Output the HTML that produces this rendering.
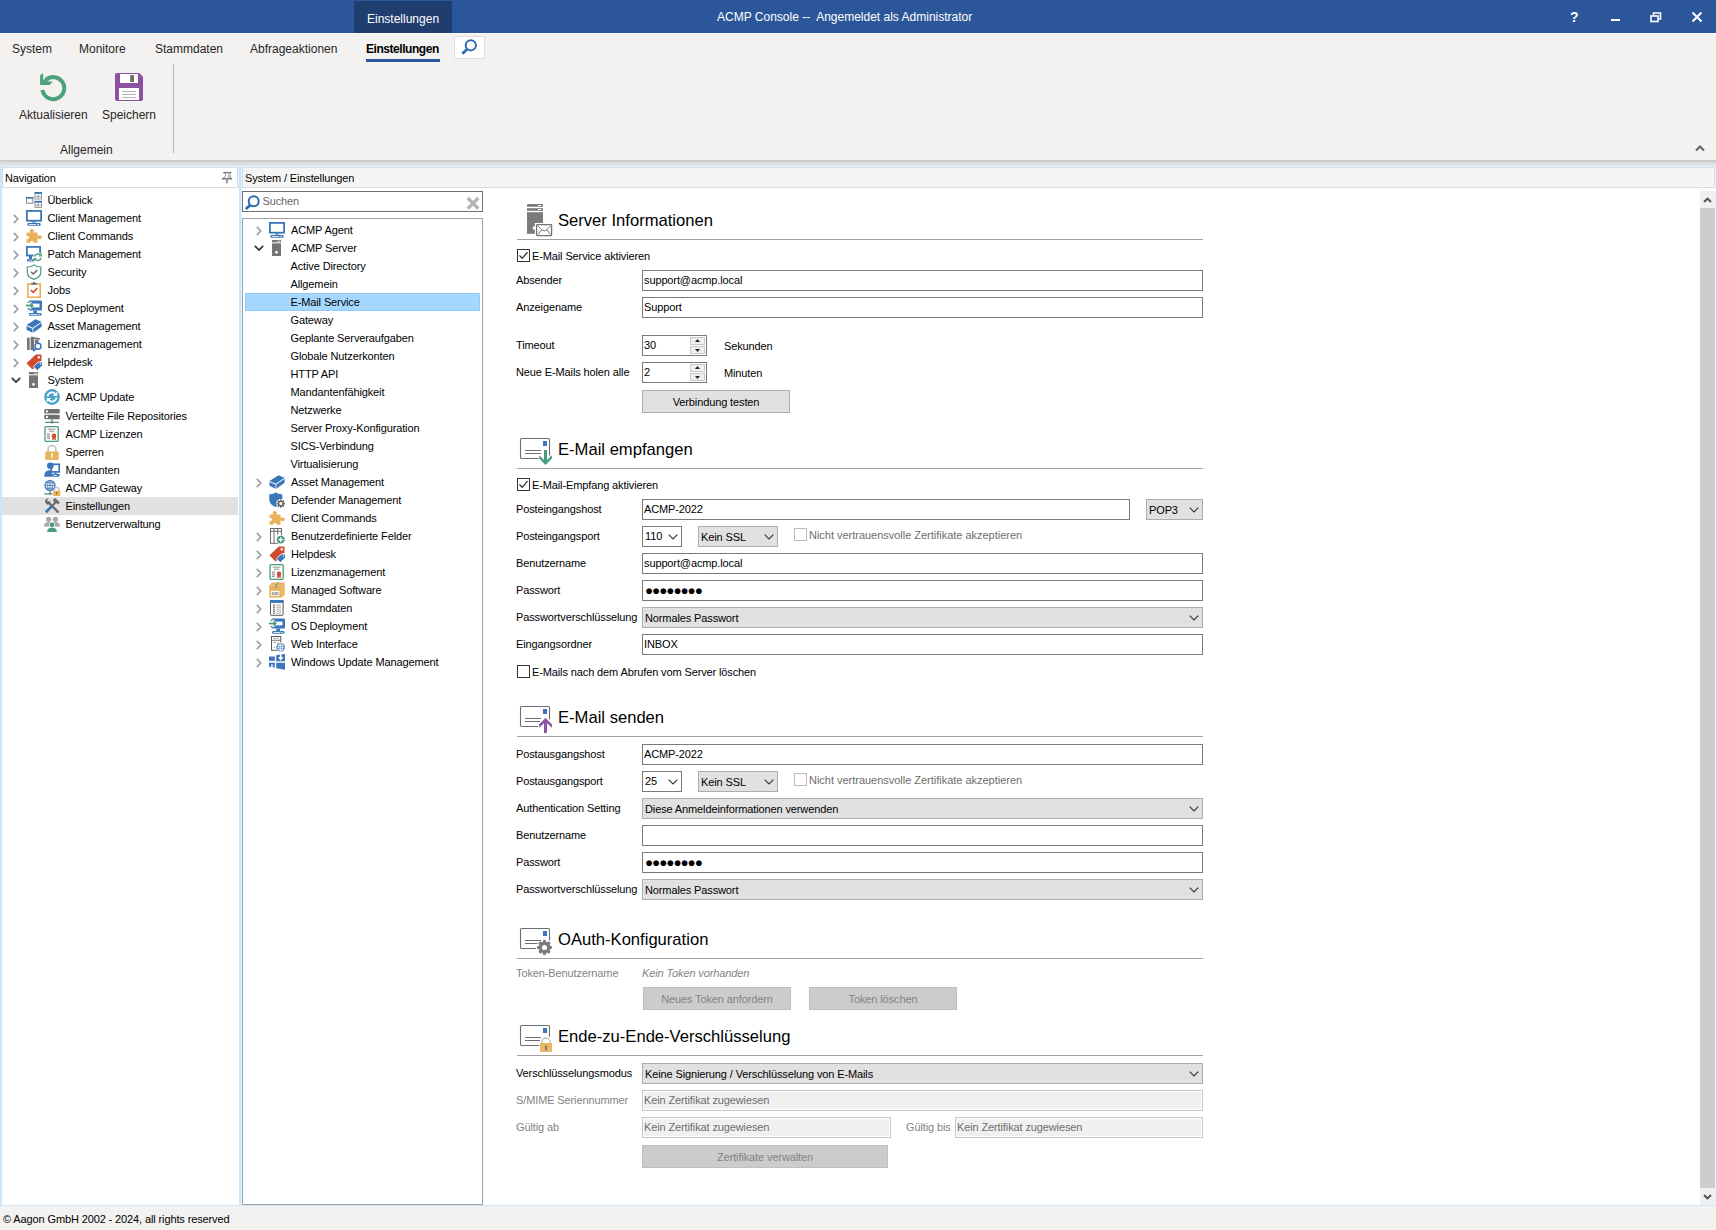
<!DOCTYPE html>
<html lang="de"><head><meta charset="utf-8"><title>ACMP Console</title>
<style>
*{box-sizing:border-box;margin:0;padding:0}
html,body{width:1716px;height:1230px;overflow:hidden;background:#f3f2f1}
body{position:relative;font-family:"Liberation Sans",sans-serif;font-size:11px;letter-spacing:-0.12px;color:#000;line-height:1}
.a{position:absolute;white-space:pre}
.rb{font-size:12px;color:#262626;letter-spacing:0}
.t{position:absolute;white-space:pre;height:18px;line-height:18px}
.lbl{position:absolute;white-space:pre;height:14px;line-height:14px;left:516px}
.inp{position:absolute;height:21px;border:1px solid #7a7a7a;background:#fff;line-height:19px;padding-left:1px;white-space:pre}
.sel{position:absolute;height:21px;border:1px solid #adadad;background:#e1e1e1;line-height:21px;padding-left:2px;white-space:pre}
.dis{position:absolute;height:21px;border:1px solid #c6c6c6;box-shadow:inset 0 0 0 1px #fff;background:#f0f0f0;line-height:19px;padding-left:1px;white-space:pre;color:#6d6d6d}
.btn{position:absolute;height:23px;border:1px solid #adadad;background:#e1e1e1;line-height:22px;text-align:center;white-space:pre}
.btn.d{background:#cccccc;border-color:#bfbfbf;color:#838383}
.h{position:absolute;left:558px;font-size:16.6px;letter-spacing:0;height:22px;line-height:22px;white-space:pre;color:#000}
.hr{position:absolute;left:517px;width:686px;height:1px;background:#a0a0a0}
.cb{position:absolute;width:13px;height:13px;border:1px solid #333;background:#fff}
.cb.g{border-color:#bcbcbc}
.gray{color:#838383}
.gray2{color:#6d6d6d;letter-spacing:-0.02px}
svg{position:absolute;overflow:visible}
</style></head><body>

<div class="a" style="left:0;top:0;width:1716px;height:33px;background:#2b579a"></div>
<div class="a" style="left:354px;top:1px;width:98px;height:32px;background:#1f3d6e"></div>
<div class="a rb" style="left:367px;top:12px;color:#fff;line-height:14px">Einstellungen</div>
<div class="a rb" style="left:717px;top:10px;color:#fff;line-height:14px">ACMP Console --  Angemeldet als Administrator</div>
<div class="a" style="left:1570px;top:9px;color:#fff;font-weight:bold;font-size:14px;line-height:16px">?</div>
<div class="a" style="left:1611px;top:19px;width:9px;height:2px;background:#fff"></div>
<svg style="left:1650px;top:12px" width="12" height="11"><path d="M3.5 3.5V1h7v6H8" fill="none" stroke="#fff" stroke-width="1.6"/><rect x="1" y="4" width="7" height="5.5" fill="none" stroke="#fff" stroke-width="1.6"/></svg>
<svg style="left:1692px;top:12px" width="10" height="10"><path d="M0.5 0.5L9.5 9.5M9.5 0.5L0.5 9.5" stroke="#fff" stroke-width="2"/></svg>
<div class="a" style="left:0;top:33px;width:1716px;height:127px;background:#f3f2f1"></div>
<div class="a" style="left:0;top:33px;width:1716px;height:1px;background:#fcfcfb"></div>
<div class="a rb" style="left:12px;top:42px;line-height:15px">System</div>
<div class="a rb" style="left:79px;top:42px;line-height:15px">Monitore</div>
<div class="a rb" style="left:155px;top:42px;line-height:15px">Stammdaten</div>
<div class="a rb" style="left:250px;top:42px;line-height:15px">Abfrageaktionen</div>
<div class="a rb" style="left:366px;top:42px;line-height:15px;font-weight:bold;color:#000;letter-spacing:-0.45px">Einstellungen</div>
<div class="a" style="left:366px;top:59px;width:74px;height:3px;background:#2b579a"></div>
<div class="a" style="left:453.500px;top:35.500px;width:31px;height:23px;background:#fff;border:1px solid #e1dfdd"></div>
<svg style="left:460px;top:38px" width="20" height="18"><circle cx="10.800" cy="7.300" r="5.100" fill="none" stroke="#2f6eb5" stroke-width="2"/><path d="M7.200 11L2.400 15.800" stroke="#2f6eb5" stroke-width="2.800"/></svg>
<svg style="left:39px;top:72px" width="30" height="31" viewBox="0 0 30 31"><path d="M6.500 8.300A11 11 0 1 1 3.400 18" fill="none" stroke="#4ba07d" stroke-width="4"/><path d="M1.100 3.500L4 0.900L4.200 7.200L8.500 9.500L13.800 9.400L10.500 12.900H1.100Z" fill="#4ba07d"/></svg>
<svg style="left:115px;top:73px" width="28" height="28" viewBox="0 0 28 28"><path d="M2 0H24.300L28 3.700V26Q28 28 26 28H2Q0 28 0 26V2Q0 0 2 0Z" fill="#8c51a0"/><rect x="5" y="1" width="18" height="9" fill="#fff"/><rect x="15.200" y="2.100" width="3.800" height="6.800" rx="0.500" fill="#6d6e72"/><rect x="4" y="15" width="20" height="12" fill="#fff"/><path d="M7 18.500H21M7 21.500H21M7 24.500H21" stroke="#b3b3b3" stroke-width="1"/></svg>
<div class="a rb" style="left:19px;top:108px;line-height:15px">Aktualisieren</div>
<div class="a rb" style="left:102px;top:108px;line-height:15px">Speichern</div>
<div class="a rb" style="left:60px;top:143px;line-height:15px">Allgemein</div>
<div class="a" style="left:173px;top:64px;width:1px;height:89px;background:#b9b7b5"></div>
<svg style="left:1695px;top:144px" width="10" height="8"><path d="M1 6.500L5 2.500L9 6.500" fill="none" stroke="#666" stroke-width="2"/></svg>
<div class="a" style="left:0;top:160px;width:1716px;height:5px;background:linear-gradient(#cbc9c7,#e6e6e6)"></div>
<div class="a" style="left:0;top:165px;width:1716px;height:1041px;background:#e8f4fd"></div>
<div class="a" style="left:0;top:165px;width:1716px;height:1px;background:#cce6fb"></div>
<div class="a" style="left:0;top:1205px;width:1716px;height:1px;background:#cce6fb"></div>
<div class="a" style="left:0;top:166px;width:1.5px;height:1040px;background:#cce6fb"></div>
<div class="a" style="left:239px;top:166px;width:2px;height:1039px;background:#c9e5fb"></div>
<div class="a" style="left:2px;top:167px;width:236px;height:21px;background:#fff;border:1px solid #dcdcdc"></div>
<div class="a" style="left:2px;top:188px;width:236.500px;height:1017px;background:#fff"></div>
<div class="t" style="left:5px;top:169px;">Navigation</div>
<svg style="left:221px;top:171px" width="12" height="14" viewBox="0 0 12 14"><path d="M2.200 1.600H10.300" stroke="#777" stroke-width="1.300"/><path d="M3.300 2.200C5.500 4 5 5 2.200 7.200M9.200 2.200C8.200 4 8.800 5.500 10.300 7.200" fill="none" stroke="#777" stroke-width="1"/><path d="M6.800 2.200H9L9.800 7H6.800Z" fill="#bdbdbd"/><path d="M1 7.800H11.200" stroke="#777" stroke-width="1.500"/><path d="M5.300 8.500H6.900L6.700 11.300L5.200 13Z" fill="#777"/></svg>
<div class="a" style="left:242px;top:167px;width:1473px;height:21px;background:#f5f5f5;border:1px solid #dcdcdc"></div>
<div class="a" style="left:241.500px;top:188px;width:1474.500px;height:1017px;background:#fff"></div>
<div class="t" style="left:245px;top:169px;">System / Einstellungen</div>
<div class="a" style="left:0;top:1206px;width:1716px;height:24px;background:#f3f2f1"></div>
<div class="t" style="left:3px;top:1210px;">© Aagon GmbH 2002 - 2024, all rights reserved</div>
<svg style="left:26px;top:192px" width="16" height="16" viewBox="0 0 16 16"><rect x="0.500" y="5.800" width="6.400" height="5.400" fill="#fff" stroke="#8a8a8a"/><rect x="0" y="5" width="7.400" height="1.600" fill="#3b75ba"/><rect x="9" y="1" width="6.500" height="6" fill="#fff" stroke="#9a9a9a"/><rect x="8.500" y="0" width="7.500" height="1.800" fill="#3b75ba"/><path d="M12.250 2V7M9 4.500H15.500" stroke="#9a9a9a" stroke-width="0.900"/><rect x="9" y="9.800" width="6.500" height="5.700" fill="#fff" stroke="#9a9a9a"/><rect x="8.500" y="8.800" width="7.500" height="1.800" fill="#3b75ba"/><path d="M12.250 10.800V15.500M9 13.200H15.500" stroke="#9a9a9a" stroke-width="0.900"/></svg>
<div class="t" style="left:47.5px;top:191px;">Überblick</div>
<svg style="left:12.5px;top:213.5px" width="6" height="10"><path d="M0.800 0.900L4.800 5L0.800 9.100" fill="none" stroke="#9c9c9c" stroke-width="1.600"/></svg>
<svg style="left:26px;top:210px" width="16" height="16" viewBox="0 0 16 16"><rect x="0.900" y="0.900" width="14.200" height="9.800" fill="#fff" stroke="#3b75ba" stroke-width="1.800"/><rect x="6.300" y="11.400" width="3.400" height="1.300" fill="#3b75ba"/><rect x="1.300" y="13" width="13.400" height="2.800" rx="1.300" fill="#3b75ba"/><rect x="2.800" y="14" width="7.200" height="0.800" fill="#fff"/><rect x="11.300" y="14" width="1.700" height="0.800" fill="#fff"/></svg>
<div class="t" style="left:47.5px;top:209px;">Client Management</div>
<svg style="left:12.5px;top:231.5px" width="6" height="10"><path d="M0.800 0.900L4.800 5L0.800 9.100" fill="none" stroke="#9c9c9c" stroke-width="1.600"/></svg>
<svg style="left:26px;top:228px" width="16" height="16" viewBox="0 0 16 16"><rect x="0.500" y="4.600" width="11" height="10.200" rx="0.600" fill="#e9b35c"/><circle cx="5.800" cy="3" r="2.100" fill="#e9b35c"/><rect x="4.600" y="3.500" width="2.400" height="2" fill="#e9b35c"/><circle cx="13.700" cy="9.300" r="2" fill="#e9b35c"/><rect x="11" y="8.100" width="2" height="2.400" fill="#e9b35c"/><circle cx="1.300" cy="9.500" r="1.700" fill="#fff"/><circle cx="6" cy="14.400" r="1.700" fill="#fff"/></svg>
<div class="t" style="left:47.5px;top:227px;">Client Commands</div>
<svg style="left:12.5px;top:249.5px" width="6" height="10"><path d="M0.800 0.900L4.800 5L0.800 9.100" fill="none" stroke="#9c9c9c" stroke-width="1.600"/></svg>
<svg style="left:26px;top:246px" width="16" height="16" viewBox="0 0 16 16"><rect x="0.900" y="0.900" width="13.200" height="8.600" fill="#fff" stroke="#3b75ba" stroke-width="1.800"/><rect x="3" y="10" width="3" height="3" fill="#3b75ba"/><rect x="1" y="13" width="7" height="2.400" rx="1" fill="#3b75ba"/><rect x="2.500" y="13.800" width="4" height="0.700" fill="#fff"/><circle cx="11.800" cy="11.300" r="4.700" fill="#fff"/><path d="M8.600 10.600A3.300 3.300 0 0 1 14.300 9.200M15 12A3.300 3.300 0 0 1 9.300 13.400" fill="none" stroke="#4a9c7c" stroke-width="1.400"/><path d="M15.800 7.200V10.600H12.600Z" fill="#4a9c7c"/><path d="M7.800 15.400V12H11Z" fill="#4a9c7c"/></svg>
<div class="t" style="left:47.5px;top:245px;">Patch Management</div>
<svg style="left:12.5px;top:267.5px" width="6" height="10"><path d="M0.800 0.900L4.800 5L0.800 9.100" fill="none" stroke="#9c9c9c" stroke-width="1.600"/></svg>
<svg style="left:26px;top:264px" width="16" height="16" viewBox="0 0 16 16"><path d="M8 0.900C6 2.600 3.500 3 1.200 3V8C1.200 12 5 14.400 8 15.400C11 14.400 14.800 12 14.800 8V3C12.500 3 10 2.600 8 0.900Z" fill="#fff" stroke="#4a9c7c" stroke-width="1.200"/><path d="M5 7.800L7.300 10L11.200 5.900" fill="none" stroke="#6a6a6a" stroke-width="1.500"/></svg>
<div class="t" style="left:47.5px;top:263px;">Security</div>
<svg style="left:12.5px;top:285.5px" width="6" height="10"><path d="M0.800 0.900L4.800 5L0.800 9.100" fill="none" stroke="#9c9c9c" stroke-width="1.600"/></svg>
<svg style="left:26px;top:282px" width="16" height="16" viewBox="0 0 16 16"><rect x="1.800" y="2" width="12.400" height="13.200" fill="#fff" stroke="#e9b35c" stroke-width="1.700"/><rect x="5.300" y="0.800" width="5.400" height="2" fill="#777"/><rect x="7" y="0" width="2" height="1.500" fill="#777"/><path d="M4.800 8L7.200 10.400L11.400 6" fill="none" stroke="#d04a30" stroke-width="1.600"/></svg>
<div class="t" style="left:47.5px;top:281px;">Jobs</div>
<svg style="left:12.5px;top:303.5px" width="6" height="10"><path d="M0.800 0.900L4.800 5L0.800 9.100" fill="none" stroke="#9c9c9c" stroke-width="1.600"/></svg>
<svg style="left:26px;top:300px" width="16" height="16" viewBox="0 0 16 16"><rect x="2.500" y="0.400" width="13.500" height="10.200" rx="1" fill="#3b75ba"/><rect x="1.500" y="3.600" width="12" height="3.800" fill="#fff"/><rect x="1.500" y="1.800" width="4" height="7.400" fill="#fff"/><path d="M2.500 2V3M2.500 8V9.200" stroke="#3b75ba" stroke-width="1.600"/><path d="M0 5.500H6" stroke="#4a9c7c" stroke-width="1.800"/><path d="M4.500 2.600L8 5.500L4.500 8.400Z" fill="#4a9c7c"/><rect x="7.300" y="10.600" width="3.700" height="2.400" fill="#3b75ba"/><rect x="3" y="13" width="12.500" height="2.800" rx="1.300" fill="#3b75ba"/><rect x="4.500" y="14" width="7" height="0.800" fill="#fff"/><rect x="12.500" y="14" width="1.500" height="0.800" fill="#fff"/></svg>
<div class="t" style="left:47.5px;top:299px;">OS Deployment</div>
<svg style="left:12.5px;top:321.5px" width="6" height="10"><path d="M0.800 0.900L4.800 5L0.800 9.100" fill="none" stroke="#9c9c9c" stroke-width="1.600"/></svg>
<svg style="left:26px;top:318px" width="16" height="16" viewBox="0 0 16 16"><path d="M0.500 7L9.500 1.300L15.600 3.800L6.800 9.800Z" fill="#3b75ba"/><path d="M0.500 7.900L6.500 10.700V14.700L0.500 11.700Z" fill="#3b75ba"/><path d="M7.300 10.600L15.600 4.800V8.800L7.300 14.700Z" fill="#3b75ba"/></svg>
<div class="t" style="left:47.5px;top:317px;">Asset Management</div>
<svg style="left:12.5px;top:339.5px" width="6" height="10"><path d="M0.800 0.900L4.800 5L0.800 9.100" fill="none" stroke="#9c9c9c" stroke-width="1.600"/></svg>
<svg style="left:26px;top:336px" width="16" height="16" viewBox="0 0 16 16"><rect x="1" y="2.500" width="2.600" height="11.500" fill="#757575"/><path d="M0.500 3L2.300 1L4 3Z" fill="#757575"/><rect x="4.600" y="1.500" width="3.400" height="12.500" fill="#757575"/><path d="M5 0.500L14 2.200V3.800L5 2.200Z" fill="#757575"/><path d="M8.800 3.500H12.500V7H8.800Z" fill="#757575"/><circle cx="12" cy="10.300" r="3" fill="#fff" stroke="#3b75ba" stroke-width="1.500"/><path d="M9.800 12.500L7.300 15.200" stroke="#3b75ba" stroke-width="1.900"/></svg>
<div class="t" style="left:47.5px;top:335px;">Lizenzmanagement</div>
<svg style="left:12.5px;top:357.5px" width="6" height="10"><path d="M0.800 0.900L4.800 5L0.800 9.100" fill="none" stroke="#9c9c9c" stroke-width="1.600"/></svg>
<svg style="left:26px;top:354px" width="16" height="16" viewBox="0 0 16 16"><path d="M0.500 9.200L9.800 0.600H15.500V6.200L6.500 15.400Z" fill="#d04a30"/><circle cx="12.800" cy="3.200" r="1.200" fill="#fff"/><path d="M7.300 13L12.200 8H16.400V11.800L11.300 16.600Z" fill="#3b75ba" stroke="#fff" stroke-width="0.900"/><circle cx="14.300" cy="10" r="0.700" fill="#fff"/></svg>
<div class="t" style="left:47.5px;top:353px;">Helpdesk</div>
<svg style="left:10.5px;top:377px" width="10" height="6"><path d="M0.800 0.800L5 5L9.200 0.800" fill="none" stroke="#333" stroke-width="1.700"/></svg>
<svg style="left:26px;top:372px" width="16" height="16" viewBox="0 0 16 16"><rect x="3" y="0" width="9" height="2.300" fill="#757575"/><rect x="8.300" y="0.700" width="3" height="0.900" fill="#e8e8e8"/><rect x="3" y="3.300" width="9" height="12.700" fill="#757575"/><circle cx="7.500" cy="12.300" r="1.400" fill="#fff"/></svg>
<div class="t" style="left:47.5px;top:371px;">System</div>
<svg style="left:44px;top:389px" width="16" height="16" viewBox="0 0 16 16"><circle cx="8" cy="8" r="7.900" fill="#4aa3c8"/><path d="M3.600 7.300A4.500 4.500 0 0 1 11.300 4.800M12.400 8.700A4.500 4.500 0 0 1 4.700 11.200" fill="none" stroke="#fff" stroke-width="1.700"/><path d="M13.300 2.500V7H8.800Z" fill="#fff"/><path d="M2.700 13.500V9H7.200Z" fill="#fff"/></svg>
<div class="t" style="left:65.5px;top:388px;">ACMP Update</div>
<svg style="left:44px;top:408px" width="16" height="16" viewBox="0 0 16 16"><rect x="0.300" y="1" width="15.400" height="4.500" rx="0.800" fill="#6e6e6e"/><rect x="2" y="2.200" width="1.800" height="2.200" fill="#fff"/><rect x="0.300" y="6.700" width="15.400" height="4.500" rx="0.800" fill="#6e6e6e"/><rect x="2" y="7.900" width="1.800" height="2.200" fill="#fff"/><path d="M8 11.200V13.700M1 14.400H15" stroke="#4a9c7c" stroke-width="1.300"/><rect x="6.300" y="13.500" width="3.400" height="1.800" fill="#777"/></svg>
<div class="t" style="left:65.5px;top:407px;">Verteilte File Repositories</div>
<svg style="left:44px;top:426px" width="16" height="16" viewBox="0 0 16 16"><rect x="1" y="0.700" width="13.200" height="14.600" rx="1" fill="#fff" stroke="#4a9c7c" stroke-width="1.300"/><path d="M3.800 3.200H11.400M5 5.200H10.200" stroke="#888" stroke-width="0.900"/><path d="M3 8.200H6M3 10.200H6M3 12.200H6" stroke="#777" stroke-width="1"/><path d="M8.500 11L8 14.200L10 13.200L12 14.200L11.500 11Z" fill="#d04a30"/><circle cx="10" cy="9.800" r="2.300" fill="#d04a30"/></svg>
<div class="t" style="left:65.5px;top:425px;">ACMP Lizenzen</div>
<svg style="left:44px;top:444px" width="16" height="16" viewBox="0 0 16 16"><path d="M4.200 8V5.300A3.800 3.800 0 0 1 11.800 5.300V8" fill="none" stroke="#c4c4c4" stroke-width="1.700"/><rect x="1.300" y="7.500" width="13.400" height="8.400" fill="#e9b35c"/><circle cx="8" cy="10.500" r="1.100" fill="#fff"/><rect x="7.400" y="10.500" width="1.200" height="3.300" fill="#fff"/></svg>
<div class="t" style="left:65.5px;top:443px;">Sperren</div>
<svg style="left:44px;top:462px" width="16" height="16" viewBox="0 0 16 16"><rect x="7.300" y="2.300" width="7.900" height="7.600" fill="#fff" stroke="#3b75ba" stroke-width="1.700"/><rect x="8" y="11.800" width="7.500" height="3" rx="0.800" fill="#3b75ba"/><rect x="9.300" y="12.900" width="3.500" height="0.800" fill="#fff"/><rect x="10.500" y="10.500" width="2" height="1.500" fill="#3b75ba"/><circle cx="6.300" cy="3.800" r="3.300" fill="#3b75ba"/><path d="M0.200 14.800C0.200 10 2.500 8 6.300 8.200L8 10V14.800Z" fill="#3b75ba"/></svg>
<div class="t" style="left:65.5px;top:461px;">Mandanten</div>
<svg style="left:44px;top:480px" width="16" height="16" viewBox="0 0 16 16"><circle cx="6" cy="5.500" r="5" fill="#fff" stroke="#3b75ba" stroke-width="1.200"/><path d="M6 0.500V10.500M1 5.500H11M2 2.800H10M2 8.200H10" stroke="#3b75ba" stroke-width="0.800"/><ellipse cx="6" cy="5.500" rx="2.300" ry="5" fill="none" stroke="#3b75ba" stroke-width="0.800"/><path d="M6 10.500V13.500M0 13.800H8.500" stroke="#4a9c7c" stroke-width="1.300"/><rect x="5" y="12.700" width="2" height="1.800" fill="#777"/><path d="M10.500 11.500V9.500A2.200 2.200 0 0 1 14.900 9.500V11.500" fill="#fff" stroke="#c4c4c4" stroke-width="1.300"/><rect x="9.200" y="10.800" width="7" height="5.200" fill="#e9b35c"/><rect x="12.200" y="12" width="1" height="2.500" fill="#8a6420"/></svg>
<div class="t" style="left:65.5px;top:479px;">ACMP Gateway</div>
<div class="a" style="left:2px;top:497px;width:236px;height:18px;background:#e1e1e1"></div>
<svg style="left:44px;top:498px" width="16" height="16" viewBox="0 0 16 16"><path d="M3.500 3.500L13.500 13.500" stroke="#6a6a6a" stroke-width="2.300"/><path d="M0.800 3.200A3.300 3.300 0 0 1 4.800 0.600L3 2.700L4.800 4.700L6.600 2.800A3.300 3.300 0 0 1 2.500 6.500Z" fill="#6a6a6a"/><circle cx="13.700" cy="13.700" r="1.300" fill="#6a6a6a"/><path d="M12.500 3.500L7 9" stroke="#6a6a6a" stroke-width="2"/><path d="M7.200 8.800L1.800 14.200" stroke="#3b75ba" stroke-width="2.800"/><path d="M9 1.200L11.500 0.300L15.800 4.600L14 6.500L12.800 5.200L11.200 5.500L9.800 4Z" fill="#6a6a6a"/></svg>
<div class="t" style="left:65.5px;top:497px;">Einstellungen</div>
<svg style="left:44px;top:516px" width="16" height="16" viewBox="0 0 16 16"><circle cx="4.600" cy="3.300" r="2.600" fill="#a8a8a8"/><circle cx="11.400" cy="3.300" r="2.600" fill="#a8a8a8"/><path d="M0 10.500C0 7 2 6 4.600 6C6.500 6 8 6.600 8 8C8 6.600 9.500 6 11.400 6C14 6 16 7 16 10.500Z" fill="#a8a8a8"/><circle cx="8" cy="8.800" r="3" fill="#fff"/><path d="M2.500 16C2.500 12 5 11 8 11S13.500 12 13.500 16Z" fill="#fff" stroke="#fff" stroke-width="1.200"/><circle cx="8" cy="8.800" r="2.400" fill="#4a9c7c"/><path d="M3.200 16C3.200 12.700 5.300 11.800 8 11.800S12.800 12.700 12.800 16Z" fill="#4a9c7c"/></svg>
<div class="t" style="left:65.5px;top:515px;">Benutzerverwaltung</div>
<div class="a" style="left:242px;top:191px;width:241px;height:21px;background:#fff;border:1px solid #707070"></div>
<svg style="left:245px;top:194px" width="16" height="16"><circle cx="8.700" cy="7.300" r="5" fill="none" stroke="#2a6ab1" stroke-width="2"/><path d="M5.300 10.900L0.800 15.100" stroke="#2a6ab1" stroke-width="2.800"/></svg>
<div class="t" style="left:262.5px;top:192px;color:#666">Suchen</div>
<svg style="left:466px;top:196px" width="14" height="14"><path d="M1.700 2L12.300 12.600M12.300 2L1.700 12.600" stroke="#b4b4b4" stroke-width="3.400"/></svg>
<div class="a" style="left:242px;top:218px;width:241px;height:987px;background:#fff;border:1px solid #a0a0a0"></div>
<svg style="left:256px;top:225.5px" width="6" height="10"><path d="M0.800 0.900L4.800 5L0.800 9.100" fill="none" stroke="#9c9c9c" stroke-width="1.600"/></svg>
<svg style="left:269px;top:222px" width="16" height="16" viewBox="0 0 16 16"><rect x="0.900" y="0.900" width="14.200" height="9.800" fill="#fff" stroke="#3b75ba" stroke-width="1.800"/><rect x="6.300" y="11.400" width="3.400" height="1.300" fill="#3b75ba"/><rect x="1.300" y="13" width="13.400" height="2.800" rx="1.300" fill="#3b75ba"/><rect x="2.800" y="14" width="7.200" height="0.800" fill="#fff"/><rect x="11.300" y="14" width="1.700" height="0.800" fill="#fff"/></svg>
<div class="t" style="left:291px;top:221px;">ACMP Agent</div>
<svg style="left:254px;top:245px" width="10" height="6"><path d="M0.800 0.800L5 5L9.200 0.800" fill="none" stroke="#333" stroke-width="1.700"/></svg>
<svg style="left:269px;top:240px" width="16" height="16" viewBox="0 0 16 16"><rect x="3" y="0" width="9" height="2.300" fill="#757575"/><rect x="8.300" y="0.700" width="3" height="0.900" fill="#e8e8e8"/><rect x="3" y="3.300" width="9" height="12.700" fill="#757575"/><circle cx="7.500" cy="12.300" r="1.400" fill="#fff"/></svg>
<div class="t" style="left:291px;top:239px;">ACMP Server</div>
<div class="t" style="left:290.5px;top:257px;">Active Directory</div>
<div class="t" style="left:290.5px;top:275px;">Allgemein</div>
<div class="a" style="left:245px;top:293px;width:235px;height:18px;background:#a6d8ff;border:1px solid #8fcbfb"></div>
<div class="t" style="left:290.5px;top:293px;">E-Mail Service</div>
<div class="t" style="left:290.5px;top:311px;">Gateway</div>
<div class="t" style="left:290.5px;top:329px;">Geplante Serveraufgaben</div>
<div class="t" style="left:290.5px;top:347px;">Globale Nutzerkonten</div>
<div class="t" style="left:290.5px;top:365px;">HTTP API</div>
<div class="t" style="left:290.5px;top:383px;">Mandantenfähigkeit</div>
<div class="t" style="left:290.5px;top:401px;">Netzwerke</div>
<div class="t" style="left:290.5px;top:419px;">Server Proxy-Konfiguration</div>
<div class="t" style="left:290.5px;top:437px;">SICS-Verbindung</div>
<div class="t" style="left:290.5px;top:455px;">Virtualisierung</div>
<svg style="left:256px;top:477.5px" width="6" height="10"><path d="M0.800 0.900L4.800 5L0.800 9.100" fill="none" stroke="#9c9c9c" stroke-width="1.600"/></svg>
<svg style="left:269px;top:474px" width="16" height="16" viewBox="0 0 16 16"><path d="M0.500 7L9.500 1.300L15.600 3.800L6.800 9.800Z" fill="#3b75ba"/><path d="M0.500 7.900L6.500 10.700V14.700L0.500 11.700Z" fill="#3b75ba"/><path d="M7.300 10.600L15.600 4.800V8.800L7.300 14.700Z" fill="#3b75ba"/></svg>
<div class="t" style="left:291px;top:473px;">Asset Management</div>
<svg style="left:269px;top:492px" width="16" height="16" viewBox="0 0 16 16"><path d="M6.800 0.300C5 1.800 2.500 2.300 0.300 2.300V7.500C0.300 11.500 4 14 6.800 15C9.600 14 13.300 11.500 13.300 7.500V2.300C11 2.300 8.600 1.800 6.800 0.300Z" fill="#3b75ba"/><circle cx="11.800" cy="11.600" r="4.700" fill="#fff"/><path d="M11.800 7.400V15.800M7.600 11.600H16M8.800 8.600L14.800 14.600M14.800 8.600L8.800 14.600" stroke="#6a6a6a" stroke-width="1.700"/><circle cx="11.800" cy="11.600" r="2.900" fill="#6a6a6a"/><circle cx="11.800" cy="11.600" r="1.500" fill="#fff"/></svg>
<div class="t" style="left:291px;top:491px;">Defender Management</div>
<svg style="left:269px;top:510px" width="16" height="16" viewBox="0 0 16 16"><rect x="0.500" y="4.600" width="11" height="10.200" rx="0.600" fill="#e9b35c"/><circle cx="5.800" cy="3" r="2.100" fill="#e9b35c"/><rect x="4.600" y="3.500" width="2.400" height="2" fill="#e9b35c"/><circle cx="13.700" cy="9.300" r="2" fill="#e9b35c"/><rect x="11" y="8.100" width="2" height="2.400" fill="#e9b35c"/><circle cx="1.300" cy="9.500" r="1.700" fill="#fff"/><circle cx="6" cy="14.400" r="1.700" fill="#fff"/></svg>
<div class="t" style="left:291px;top:509px;">Client Commands</div>
<svg style="left:256px;top:531.5px" width="6" height="10"><path d="M0.800 0.900L4.800 5L0.800 9.100" fill="none" stroke="#9c9c9c" stroke-width="1.600"/></svg>
<svg style="left:269px;top:528px" width="16" height="16" viewBox="0 0 16 16"><rect x="1.500" y="0.500" width="11" height="14.800" fill="#fff" stroke="#6a6a6a"/><path d="M1.500 3.300H12.500M5 0.500V15.300M8.700 0.500V7" stroke="#6a6a6a" stroke-width="1"/><circle cx="11.700" cy="11.600" r="4.700" fill="#fff"/><circle cx="11.700" cy="11.600" r="3.900" fill="#4a9c7c"/><path d="M11.700 9.200V14M9.300 11.600H14.100" stroke="#fff" stroke-width="1.200"/></svg>
<div class="t" style="left:291px;top:527px;">Benutzerdefinierte Felder</div>
<svg style="left:256px;top:549.5px" width="6" height="10"><path d="M0.800 0.900L4.800 5L0.800 9.100" fill="none" stroke="#9c9c9c" stroke-width="1.600"/></svg>
<svg style="left:269px;top:546px" width="16" height="16" viewBox="0 0 16 16"><path d="M0.500 9.200L9.800 0.600H15.500V6.200L6.500 15.400Z" fill="#d04a30"/><circle cx="12.800" cy="3.200" r="1.200" fill="#fff"/><path d="M7.300 13L12.200 8H16.400V11.800L11.300 16.600Z" fill="#3b75ba" stroke="#fff" stroke-width="0.900"/><circle cx="14.300" cy="10" r="0.700" fill="#fff"/></svg>
<div class="t" style="left:291px;top:545px;">Helpdesk</div>
<svg style="left:256px;top:567.5px" width="6" height="10"><path d="M0.800 0.900L4.800 5L0.800 9.100" fill="none" stroke="#9c9c9c" stroke-width="1.600"/></svg>
<svg style="left:269px;top:564px" width="16" height="16" viewBox="0 0 16 16"><rect x="1" y="0.700" width="13.200" height="14.600" rx="1" fill="#fff" stroke="#4a9c7c" stroke-width="1.300"/><path d="M3.800 3.200H11.400M5 5.200H10.200" stroke="#888" stroke-width="0.900"/><path d="M3 8.200H6M3 10.200H6M3 12.200H6" stroke="#777" stroke-width="1"/><path d="M8.500 11L8 14.200L10 13.200L12 14.200L11.500 11Z" fill="#d04a30"/><circle cx="10" cy="9.800" r="2.300" fill="#d04a30"/></svg>
<div class="t" style="left:291px;top:563px;">Lizenzmanagement</div>
<svg style="left:256px;top:585.5px" width="6" height="10"><path d="M0.800 0.900L4.800 5L0.800 9.100" fill="none" stroke="#9c9c9c" stroke-width="1.600"/></svg>
<svg style="left:269px;top:582px" width="16" height="16" viewBox="0 0 16 16"><path d="M0.300 3.500L3 0.500H15.700V12.500L13 15.500H0.300Z" fill="#e9b35c"/><path d="M13 3.500L15.700 0.500M13 3.500V15.500M0.300 3.500H13" stroke="#f3cd90" stroke-width="0.700" fill="none"/><path d="M6 3.500L8.300 0.500H10.300L8 3.500V6H6Z" fill="#999"/><rect x="1.800" y="8.800" width="8.700" height="5" fill="#fff"/><path d="M3.300 10V13M4.800 10V13M6.300 10V13M7.700 10V13M9 10V13" stroke="#666" stroke-width="0.700"/></svg>
<div class="t" style="left:291px;top:581px;">Managed Software</div>
<svg style="left:256px;top:603.5px" width="6" height="10"><path d="M0.800 0.900L4.800 5L0.800 9.100" fill="none" stroke="#9c9c9c" stroke-width="1.600"/></svg>
<svg style="left:269px;top:600px" width="16" height="16" viewBox="0 0 16 16"><rect x="1.500" y="1" width="12.600" height="14.300" rx="0.600" fill="#fff" stroke="#5a5a5a" stroke-width="1"/><rect x="1" y="0" width="13.600" height="2.900" fill="#3b75ba"/><path d="M4 5.200H6M4 7.200H6M4 9.200H6M4 11.200H6M4 13.200H6" stroke="#333" stroke-width="0.900"/><path d="M7.300 5.200H12M7.300 7.200H12M7.300 9.200H12M7.300 11.200H12M7.300 13.200H12" stroke="#999" stroke-width="0.800"/></svg>
<div class="t" style="left:291px;top:599px;">Stammdaten</div>
<svg style="left:256px;top:621.5px" width="6" height="10"><path d="M0.800 0.900L4.800 5L0.800 9.100" fill="none" stroke="#9c9c9c" stroke-width="1.600"/></svg>
<svg style="left:269px;top:618px" width="16" height="16" viewBox="0 0 16 16"><rect x="2.500" y="0.400" width="13.500" height="10.200" rx="1" fill="#3b75ba"/><rect x="1.500" y="3.600" width="12" height="3.800" fill="#fff"/><rect x="1.500" y="1.800" width="4" height="7.400" fill="#fff"/><path d="M2.500 2V3M2.500 8V9.200" stroke="#3b75ba" stroke-width="1.600"/><path d="M0 5.500H6" stroke="#4a9c7c" stroke-width="1.800"/><path d="M4.500 2.600L8 5.500L4.500 8.400Z" fill="#4a9c7c"/><rect x="7.300" y="10.600" width="3.700" height="2.400" fill="#3b75ba"/><rect x="3" y="13" width="12.500" height="2.800" rx="1.300" fill="#3b75ba"/><rect x="4.500" y="14" width="7" height="0.800" fill="#fff"/><rect x="12.500" y="14" width="1.500" height="0.800" fill="#fff"/></svg>
<div class="t" style="left:291px;top:617px;">OS Deployment</div>
<svg style="left:256px;top:639.5px" width="6" height="10"><path d="M0.800 0.900L4.800 5L0.800 9.100" fill="none" stroke="#9c9c9c" stroke-width="1.600"/></svg>
<svg style="left:269px;top:636px" width="16" height="16" viewBox="0 0 16 16"><rect x="2.500" y="0.500" width="9.300" height="13.800" fill="#fff" stroke="#5a5a5a"/><path d="M2.500 4.300H11.800" stroke="#5a5a5a" stroke-width="0.800"/><path d="M4.500 2.400H6.800M7.800 2.400H9.800M4.500 6.400H7M4.800 12L6 10.800" stroke="#777" stroke-width="0.800"/><rect x="8.500" y="6" width="0.900" height="0.900" fill="#d04a30"/><circle cx="11.600" cy="11.300" r="4.800" fill="#fff"/><circle cx="11.600" cy="11.300" r="4.300" fill="#3b75ba"/><path d="M11.600 7.500V15.100M7.800 11.300H15.400M8.500 9.300H14.700M8.500 13.300H14.700" stroke="#fff" stroke-width="0.700"/><ellipse cx="11.600" cy="11.300" rx="1.900" ry="3.800" fill="none" stroke="#fff" stroke-width="0.700"/></svg>
<div class="t" style="left:291px;top:635px;">Web Interface</div>
<svg style="left:256px;top:657.5px" width="6" height="10"><path d="M0.800 0.900L4.800 5L0.800 9.100" fill="none" stroke="#9c9c9c" stroke-width="1.600"/></svg>
<svg style="left:269px;top:654px" width="16" height="16" viewBox="0 0 16 16"><path d="M0 2.500H5.800V6.800H0Z" fill="#3b75ba"/><path d="M7.200 1.300L16 0V7.300H7.200Z" fill="#3b75ba"/><path d="M0 8.800H5.800V13.500L0 12.800Z" fill="#3b75ba"/><path d="M7.200 8.800H16V15.800L7.200 14.300Z" fill="#3b75ba"/><path d="M11.700 0V4.500M9.800 3L11.700 5.500L13.600 3" stroke="#fff" stroke-width="1.400" fill="none"/><path d="M2.200 13.500V10.300H3.700V13.500" fill="#fff"/></svg>
<div class="t" style="left:291px;top:653px;">Windows Update Management</div>
<div class="a" style="left:1700px;top:191px;width:16px;height:1014px;background:#f0f0f0"></div>
<div class="a" style="left:1700px;top:208px;width:15px;height:980px;background:#cdcdcd"></div>
<svg style="left:1703px;top:196px" width="9" height="8"><path d="M1 6L4.500 2.500L8 6" fill="none" stroke="#505050" stroke-width="1.900"/></svg>
<svg style="left:1703px;top:1193px" width="9" height="8"><path d="M1 2L4.500 5.500L8 2" fill="none" stroke="#505050" stroke-width="1.900"/></svg>
<svg style="left:527px;top:204px" width="26" height="33" viewBox="0 0 26 33"><path d="M0.800 0H15.200L16 0.800V2.800H0V0.800Z" fill="#7a7a7a"/><rect x="0" y="4.200" width="16" height="2.600" fill="#7a7a7a"/><rect x="0" y="8.200" width="16" height="21.600" fill="#7a7a7a"/><rect x="10.800" y="0.900" width="3.400" height="1" rx="0.500" fill="#fff"/><rect x="10.800" y="5" width="3.400" height="1" rx="0.500" fill="#fff"/><circle cx="7.300" cy="24" r="1.700" fill="#fff"/><rect x="7.800" y="19" width="18" height="14" fill="#fff"/><rect x="9.600" y="20.600" width="15" height="11" rx="0.800" fill="#fff" stroke="#707377" stroke-width="1.300"/><path d="M10.800 21.800C14 25 15 26.800 17.200 26.800S20.500 25 23.600 21.800M10.800 30.600L14.500 26M23.600 30.600L20 26" fill="none" stroke="#707377" stroke-width="1"/></svg>
<div class="h" style="top:210px">Server Informationen</div>
<div class="hr" style="top:239px"></div>
<div class="cb" style="left:517px;top:249px"></div>
<svg style="left:517px;top:249px" width="13" height="13"><path d="M2.500 6.500L5.200 9.300L10.500 3.200" fill="none" stroke="#222" stroke-width="1.2"/></svg>
<div class="lbl " style="left:532px;top:249px">E-Mail Service aktivieren</div>
<div class="lbl " style="top:273px">Absender</div>
<div class="inp" style="left:642px;top:270px;width:561px;height:21px;">support@acmp.local</div>
<div class="lbl " style="top:300px">Anzeigename</div>
<div class="inp" style="left:642px;top:297px;width:561px;height:21px;">Support</div>
<div class="lbl " style="top:338px">Timeout</div>
<div class="inp" style="left:642px;top:335px;width:65px;height:21px;">30</div>
<div class="a" style="left:690px;top:337px;width:15px;height:8px;background:#f0f0f0;border:1px solid #c8c8c8"></div>
<svg style="left:695px;top:339px" width="5" height="3"><path d="M0 3L2.500 0L5 3Z" fill="#222"/></svg>
<div class="a" style="left:690px;top:346px;width:15px;height:8px;background:#f0f0f0;border:1px solid #c8c8c8"></div>
<svg style="left:695px;top:349px" width="5" height="3"><path d="M0 0L2.500 3L5 0Z" fill="#222"/></svg>
<div class="lbl" style="left:724px;top:339px">Sekunden</div>
<div class="lbl " style="top:365px">Neue E-Mails holen alle</div>
<div class="inp" style="left:642px;top:362px;width:65px;height:21px;">2</div>
<div class="a" style="left:690px;top:364px;width:15px;height:8px;background:#f0f0f0;border:1px solid #c8c8c8"></div>
<svg style="left:695px;top:366px" width="5" height="3"><path d="M0 3L2.500 0L5 3Z" fill="#222"/></svg>
<div class="a" style="left:690px;top:373px;width:15px;height:8px;background:#f0f0f0;border:1px solid #c8c8c8"></div>
<svg style="left:695px;top:376px" width="5" height="3"><path d="M0 0L2.500 3L5 0Z" fill="#222"/></svg>
<div class="lbl" style="left:724px;top:366px">Minuten</div>
<div class="btn" style="left:642px;top:390px;width:148px">Verbindung testen</div>
<svg style="left:520px;top:438px" width="33" height="28" viewBox="0 0 33 28"><path d="M18.5 20.500H1.700Q0.500 20.500 0.500 19.300V1.700Q0.500 0.500 1.700 0.500H28.300Q29.500 0.500 29.500 1.700V17.5" fill="none" stroke="#6b6e72" stroke-width="1.100"/><rect x="23" y="3" width="4" height="5" fill="#3b75ba"/><path d="M5 12.500H21M5 15.500H21" stroke="#6b6e72" stroke-width="1"/><path d="M25.500 12V24" stroke="#4a9c7c" stroke-width="3"/><path d="M19.200 17.200V20.400L25.500 27L31.900 20.400V17.200L25.500 23.500Z" fill="#4a9c7c"/></svg>
<div class="h" style="top:439px">E-Mail empfangen</div>
<div class="hr" style="top:468px"></div>
<div class="cb" style="left:517px;top:478px"></div>
<svg style="left:517px;top:478px" width="13" height="13"><path d="M2.500 6.500L5.200 9.300L10.500 3.200" fill="none" stroke="#222" stroke-width="1.2"/></svg>
<div class="lbl " style="left:532px;top:478px">E-Mail-Empfang aktivieren</div>
<div class="lbl " style="top:502px">Posteingangshost</div>
<div class="inp" style="left:642px;top:499px;width:488px;height:21px;">ACMP-2022</div>
<div class="sel" style="left:1146px;top:499px;width:57px;height:21px;">POP3</div>
<svg style="left:1188.5px;top:507px" width="10" height="6"><path d="M0.700 0.700L5 5L9.300 0.700" fill="none" stroke="#333" stroke-width="1.1"/></svg>
<div class="lbl " style="top:529px">Posteingangsport</div>
<div class="inp" style="left:642px;top:526px;width:40px;height:21px;padding-left:2px">110</div>
<svg style="left:667.5px;top:534px" width="10" height="6"><path d="M0.700 0.700L5 5L9.300 0.700" fill="none" stroke="#333" stroke-width="1.1"/></svg>
<div class="sel" style="left:698px;top:526px;width:80px;height:21px;">Kein SSL</div>
<svg style="left:763.5px;top:534px" width="10" height="6"><path d="M0.700 0.700L5 5L9.300 0.700" fill="none" stroke="#333" stroke-width="1.1"/></svg>
<div class="cb g" style="left:794px;top:528px"></div>
<div class="lbl gray2" style="left:809px;top:528px">Nicht vertrauensvolle Zertifikate akzeptieren</div>
<div class="lbl " style="top:556px">Benutzername</div>
<div class="inp" style="left:642px;top:553px;width:561px;height:21px;">support@acmp.local</div>
<div class="lbl " style="top:583px">Passwort</div>
<div class="inp" style="left:642px;top:580px;width:561px;height:21px;font-size:13.500px;letter-spacing:-1.050px;padding-left:2px;line-height:19px">●●●●●●●●</div>
<div class="lbl " style="top:610px">Passwortverschlüsselung</div>
<div class="sel" style="left:642px;top:607px;width:561px;height:21px;">Normales Passwort</div>
<svg style="left:1188.5px;top:615px" width="10" height="6"><path d="M0.700 0.700L5 5L9.300 0.700" fill="none" stroke="#333" stroke-width="1.1"/></svg>
<div class="lbl " style="top:637px">Eingangsordner</div>
<div class="inp" style="left:642px;top:634px;width:561px;height:21px;">INBOX</div>
<div class="cb" style="left:517px;top:665px"></div>
<div class="lbl " style="left:532px;top:665px">E-Mails nach dem Abrufen vom Server löschen</div>
<svg style="left:520px;top:706px" width="33" height="28" viewBox="0 0 33 28"><path d="M18 20.500H1.700Q0.500 20.500 0.500 19.300V1.700Q0.500 0.500 1.700 0.500H28.300Q29.500 0.500 29.500 1.700V13.5" fill="none" stroke="#6b6e72" stroke-width="1.100"/><rect x="23" y="3" width="4" height="5" fill="#3b75ba"/><path d="M5 12.500H21M5 15.500H20" stroke="#6b6e72" stroke-width="1"/><path d="M25.500 27V15" stroke="#8c54a4" stroke-width="3"/><path d="M19.200 21.800V18.200L25.500 12L31.900 18.200V21.800L25.500 15.800Z" fill="#8c54a4"/></svg>
<div class="h" style="top:707px">E-Mail senden</div>
<div class="hr" style="top:736px"></div>
<div class="lbl " style="top:747px">Postausgangshost</div>
<div class="inp" style="left:642px;top:744px;width:561px;height:21px;">ACMP-2022</div>
<div class="lbl " style="top:774px">Postausgangsport</div>
<div class="inp" style="left:642px;top:771px;width:40px;height:21px;padding-left:2px">25</div>
<svg style="left:667.5px;top:779px" width="10" height="6"><path d="M0.700 0.700L5 5L9.300 0.700" fill="none" stroke="#333" stroke-width="1.1"/></svg>
<div class="sel" style="left:698px;top:771px;width:80px;height:21px;">Kein SSL</div>
<svg style="left:763.5px;top:779px" width="10" height="6"><path d="M0.700 0.700L5 5L9.300 0.700" fill="none" stroke="#333" stroke-width="1.1"/></svg>
<div class="cb g" style="left:794px;top:773px"></div>
<div class="lbl gray2" style="left:809px;top:773px">Nicht vertrauensvolle Zertifikate akzeptieren</div>
<div class="lbl " style="top:801px">Authentication Setting</div>
<div class="sel" style="left:642px;top:798px;width:561px;height:21px;">Diese Anmeldeinformationen verwenden</div>
<svg style="left:1188.5px;top:806px" width="10" height="6"><path d="M0.700 0.700L5 5L9.300 0.700" fill="none" stroke="#333" stroke-width="1.1"/></svg>
<div class="lbl " style="top:828px">Benutzername</div>
<div class="inp" style="left:642px;top:825px;width:561px;height:21px;"></div>
<div class="lbl " style="top:855px">Passwort</div>
<div class="inp" style="left:642px;top:852px;width:561px;height:21px;font-size:13.500px;letter-spacing:-1.050px;padding-left:2px;line-height:19px">●●●●●●●●</div>
<div class="lbl " style="top:882px">Passwortverschlüsselung</div>
<div class="sel" style="left:642px;top:879px;width:561px;height:21px;">Normales Passwort</div>
<svg style="left:1188.5px;top:887px" width="10" height="6"><path d="M0.700 0.700L5 5L9.300 0.700" fill="none" stroke="#333" stroke-width="1.1"/></svg>
<svg style="left:520px;top:928px" width="33" height="28" viewBox="0 0 33 28"><path d="M16 20.500H1.700Q0.500 20.500 0.500 19.300V1.700Q0.500 0.500 1.700 0.500H28.300Q29.500 0.500 29.500 1.700V12.5" fill="none" stroke="#6b6e72" stroke-width="1.100"/><rect x="23" y="3" width="4" height="5" fill="#3b75ba"/><path d="M5 12.500H21M5 15.500H17.7" stroke="#6b6e72" stroke-width="1"/><path d="M22.93 14.44L23.57 12.36L25.43 12.36L26.07 14.44L26.97 14.81L28.89 13.79L30.21 15.11L29.19 17.03L29.56 17.93L31.64 18.57L31.64 20.43L29.56 21.07L29.19 21.97L30.21 23.89L28.89 25.21L26.97 24.19L26.07 24.56L25.43 26.64L23.57 26.64L22.93 24.56L22.03 24.19L20.11 25.21L18.79 23.89L19.81 21.97L19.44 21.07L17.36 20.43L17.36 18.57L19.44 17.93L19.81 17.03L18.79 15.11L20.11 13.79L22.03 14.81Z" fill="#7a7a7a" stroke="#7a7a7a" stroke-width="0.800" stroke-linejoin="round"/><circle cx="24.5" cy="19.5" r="2.6" fill="#fff"/></svg>
<div class="h" style="top:929px">OAuth-Konfiguration</div>
<div class="hr" style="top:958px"></div>
<div class="lbl gray" style="top:966px">Token-Benutzername</div>
<div class="lbl gray" style="left:642px;top:966px;font-style:italic">Kein Token vorhanden</div>
<div class="btn d" style="left:643px;top:987px;width:148px">Neues Token anfordern</div>
<div class="btn d" style="left:809px;top:987px;width:148px">Token löschen</div>
<svg style="left:520px;top:1025px" width="33" height="28" viewBox="0 0 33 28"><path d="M19 20.500H1.700Q0.500 20.500 0.500 19.300V1.700Q0.500 0.500 1.700 0.500H28.300Q29.500 0.500 29.500 1.700V11.7" fill="none" stroke="#6b6e72" stroke-width="1.100"/><rect x="23" y="3" width="4" height="5" fill="#3b75ba"/><path d="M5 12.500H21M5 15.500H20" stroke="#6b6e72" stroke-width="1"/><path d="M22 18.500V17A4 4 0 0 1 30 17V18.500" fill="none" stroke="#c3c6ca" stroke-width="1.400"/><rect x="20" y="18" width="12" height="9" fill="#eab760"/><rect x="25.100" y="20.500" width="1.800" height="5" rx="0.800" fill="#6f7684"/></svg>
<div class="h" style="top:1026px">Ende-zu-Ende-Verschlüsselung</div>
<div class="hr" style="top:1055px"></div>
<div class="lbl " style="top:1066px">Verschlüsselungsmodus</div>
<div class="sel" style="left:642px;top:1063px;width:561px;height:21px;">Keine Signierung / Verschlüsselung von E-Mails</div>
<svg style="left:1188.5px;top:1071px" width="10" height="6"><path d="M0.700 0.700L5 5L9.300 0.700" fill="none" stroke="#333" stroke-width="1.1"/></svg>
<div class="lbl gray" style="top:1093px">S/MIME Seriennummer</div>
<div class="dis" style="left:642px;top:1090px;width:561px;height:21px;">Kein Zertifikat zugewiesen</div>
<div class="lbl gray" style="top:1120px">Gültig ab</div>
<div class="dis" style="left:642px;top:1117px;width:249px;height:21px;">Kein Zertifikat zugewiesen</div>
<div class="lbl gray" style="left:906px;top:1120px">Gültig bis</div>
<div class="dis" style="left:955px;top:1117px;width:248px;height:21px;">Kein Zertifikat zugewiesen</div>
<div class="btn d" style="left:642px;top:1145px;width:246px">Zertifikate verwalten</div>
</body></html>
